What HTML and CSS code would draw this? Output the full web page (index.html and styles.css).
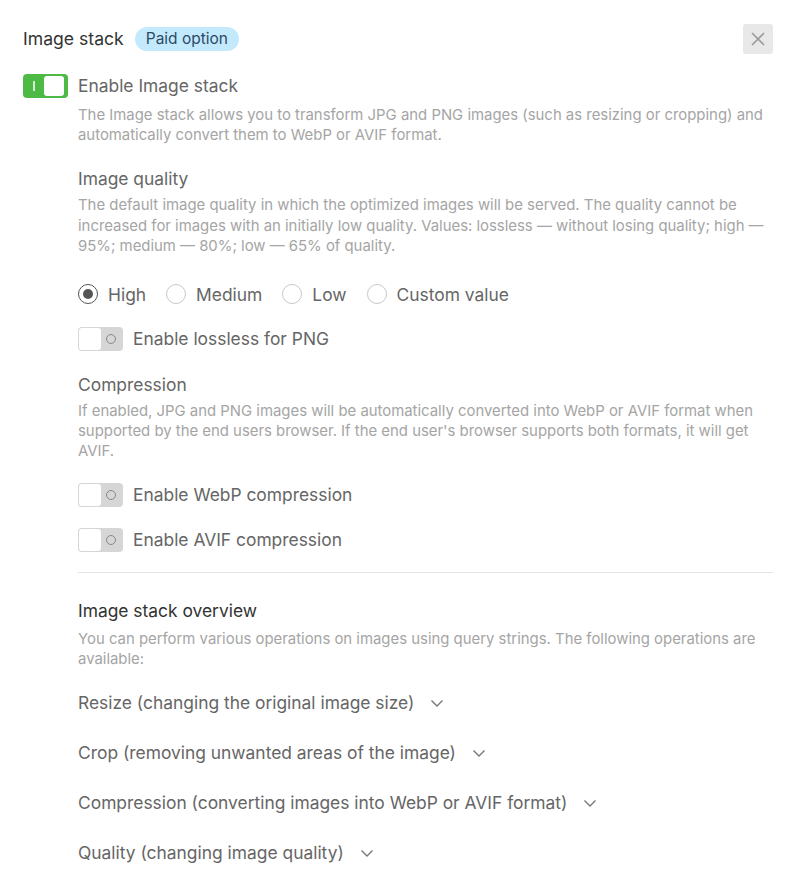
FILE: index.html
```html
<!DOCTYPE html>
<html>
<head>
<meta charset="utf-8">
<link rel="stylesheet" href="styles.css">
</head>
<body>
<div class="panel">
  <div class="header">
    <div class="title-group">
      <span class="title">Image stack</span>
      <span class="badge">Paid option</span>
    </div>
    <button class="close" aria-label="Close">
      <svg width="16" height="16" viewBox="0 0 16 16"><path d="M2 2 L14 14 M14 2 L2 14" stroke="#9a9a9a" stroke-width="1.6" fill="none"/></svg>
    </button>
  </div>

  <div class="main-row">
    <span class="toggle on"><span class="mark"></span><span class="knob"></span></span>
    <div class="main-body">
      <div class="label">Enable Image stack</div>
      <p class="desc first">The Image stack allows you to transform JPG and PNG images (such as resizing or cropping) and automatically convert them to WebP or AVIF format.</p>

      <div class="section-title">Image quality</div>
      <p class="desc tight">The default image quality in which the optimized images will be served. The quality cannot be increased for images with an initially low quality. Values: lossless — without losing quality; high — 95%; medium — 80%; low — 65% of quality.</p>

      <div class="radios">
        <label class="radio"><span class="circle checked"></span>High</label>
        <label class="radio"><span class="circle"></span>Medium</label>
        <label class="radio"><span class="circle"></span>Low</label>
        <label class="radio"><span class="circle"></span>Custom value</label>
      </div>

      <div class="opt-row"><span class="toggle off"><span class="knob"></span><span class="ring"></span></span><span class="label">Enable lossless for PNG</span></div>

      <div class="section-title">Compression</div>
      <p class="desc tight">If enabled, JPG and PNG images will be automatically converted into WebP or AVIF format when supported by the end users browser. If the end user's browser supports both formats, it will get AVIF.</p>

      <div class="opt-row"><span class="toggle off"><span class="knob"></span><span class="ring"></span></span><span class="label">Enable WebP compression</span></div>
      <div class="opt-row"><span class="toggle off"><span class="knob"></span><span class="ring"></span></span><span class="label">Enable AVIF compression</span></div>

      <hr class="sep">

      <div class="overview-title">Image stack overview</div>
      <p class="desc ov">You can perform various operations on images using query strings. The following operations are available:</p>

      <div class="acc">Resize (changing the original image size)<svg class="chev" width="14" height="14" viewBox="0 0 14 14"><path d="M1.5 4.5 L7 10 L12.5 4.5" stroke="#777" stroke-width="1.4" fill="none"/></svg></div>
      <div class="acc">Crop (removing unwanted areas of the image)<svg class="chev" width="14" height="14" viewBox="0 0 14 14"><path d="M1.5 4.5 L7 10 L12.5 4.5" stroke="#777" stroke-width="1.4" fill="none"/></svg></div>
      <div class="acc">Compression (converting images into WebP or AVIF format)<svg class="chev" width="14" height="14" viewBox="0 0 14 14"><path d="M1.5 4.5 L7 10 L12.5 4.5" stroke="#777" stroke-width="1.4" fill="none"/></svg></div>
      <div class="acc">Quality (changing image quality)<svg class="chev" width="14" height="14" viewBox="0 0 14 14"><path d="M1.5 4.5 L7 10 L12.5 4.5" stroke="#777" stroke-width="1.4" fill="none"/></svg></div>
    </div>
  </div>
</div>
</body>
</html>
```

FILE: styles.css
```css
* { box-sizing: border-box; }
html, body { margin: 0; padding: 0; background: #fff; }
body {
  font-family: Inter, "Noto Sans", "Liberation Sans", sans-serif;
  color: #666;
}
.panel {
  padding: 24px 22px 0 23px;
}
.header {
  display: flex;
  justify-content: space-between;
  align-items: center;
  height: 30px;
}
.title-group { display: flex; align-items: center; gap: 11px; }
.title { font-size: 17.6px; color: #333; line-height: 24px; }
.badge {
  background: #c3eafc;
  color: #2b4a66;
  font-size: 15.5px;
  line-height: 24px;
  padding: 0 11px;
  border-radius: 12px;
}
.close {
  width: 30px; height: 30px;
  border: none;
  background: #e8e8e8;
  border-radius: 3px;
  display: flex; align-items: center; justify-content: center;
  padding: 0;
}
.main-row {
  display: flex;
  gap: 10px;
  margin-top: 20px;
}
.main-body { flex: 1; }
.label { font-size: 17.4px; line-height: 24px; color: #666; }
.desc {
  margin: 0;
  font-size: 14.9px;
  line-height: 20.2px;
  color: #a5a5a5;
}
.desc.first { margin-top: 7px; }
.desc.tight { margin-top: 4px; }
.desc.ov { margin-top: 6px; }
.section-title { font-size: 17.4px; line-height: 24px; color: #666; margin-top: 22px; }
.toggle {
  position: relative;
  flex: none;
  width: 45px; height: 24px;
  border-radius: 4px;
  display: inline-block;
}
.toggle.on { background: #4cba45; }
.toggle.on .knob {
  position: absolute; right: 4px; top: 2px;
  width: 20px; height: 20px;
  background: #fff; border-radius: 3px;
}
.toggle.on .mark {
  position: absolute; left: 10px; top: 7px;
  width: 2px; height: 10px; background: #d2eecf;
}
.toggle.off { background: #d6d6d6; }
.toggle.off .knob {
  position: absolute; left: 1px; top: 1px;
  width: 22px; height: 22px;
  background: #fff; border-radius: 3px;
}
.toggle.off .ring {
  position: absolute; right: 7px; top: 7px;
  width: 10px; height: 10px;
  border: 1.3px solid #888; border-radius: 50%;
}
.radios {
  display: flex;
  gap: 20px;
  margin-top: 26px;
  height: 24px;
  align-items: center;
}
.radio { display: flex; align-items: center; gap: 10px; font-size: 17.4px; color: #666; }
.circle {
  width: 20px; height: 20px;
  border: 1px solid #c8c8c8;
  border-radius: 50%;
  display: inline-block;
  position: relative;
}
.circle.checked { border-color: #555; }
.circle.checked::after {
  content: "";
  position: absolute; left: 4px; top: 4px;
  width: 10px; height: 10px; border-radius: 50%;
  background: #555;
}
.opt-row {
  display: flex; align-items: center; gap: 10px;
  margin-top: 21px;
}
.sep {
  border: none; border-top: 1px solid #e3e3e3;
  margin: 20px 0 0 0;
}
.overview-title { font-size: 17.4px; line-height: 24px; color: #333; margin-top: 26px; }
.acc {
  display: flex; align-items: center; gap: 16px;
  font-size: 17.4px; line-height: 24px; color: #666;
  margin-top: 22px;
}
.acc + .acc { margin-top: 26px; }
.chev { flex: none; }
```
